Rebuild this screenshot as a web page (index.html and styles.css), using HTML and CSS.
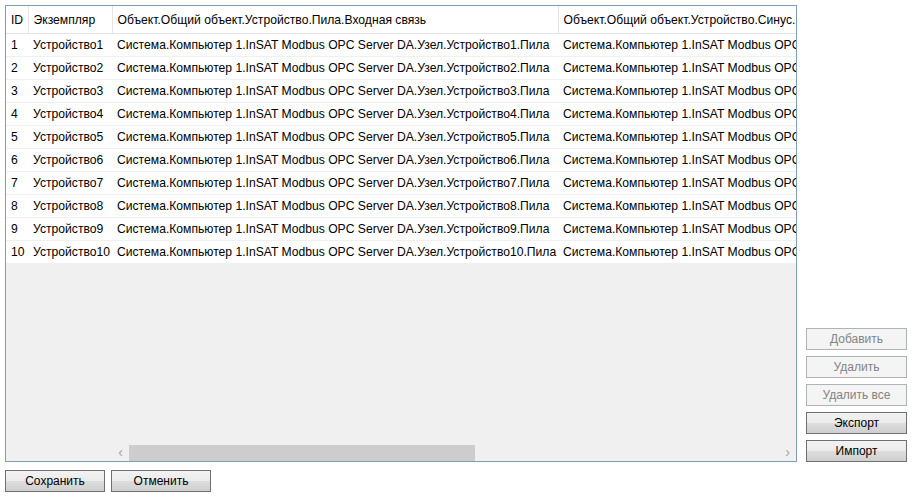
FILE: index.html
```html
<!DOCTYPE html>
<html lang="ru">
<head>
    <meta charset="UTF-8">
    <title>Экземпляры</title>
    <link rel="stylesheet" href="styles.css">
</head>
<body>
    <div class="main">
        <div class="grid">
            <div class="grid-view">
                <table class="data">
                    <colgroup>
                        <col class="c-id">
                        <col class="c-name">
                        <col class="c-link">
                        <col class="c-link2">
                    </colgroup>
                    <thead>
                        <tr>
                            <th>ID</th>
                            <th>Экземпляр</th>
                            <th>Объект.Общий объект.Устройство.Пила.Входная связь</th>
                            <th>Объект.Общий объект.Устройство.Синус.Входная связь</th>
                        </tr>
                    </thead>
                    <tbody id="rows"></tbody>
                </table>
            </div>
            <div class="hscroll">
                <div class="hscroll-frozen"></div>
                <div class="hscroll-arrow">&lsaquo;</div>
                <div class="hscroll-track"><div class="hscroll-thumb"></div></div>
                <div class="hscroll-arrow">&rsaquo;</div>
            </div>
        </div>
        <div class="side">
            <button class="btn" disabled>Добавить</button>
            <button class="btn" disabled>Удалить</button>
            <button class="btn" disabled>Удалить все</button>
            <button class="btn">Экспорт</button>
            <button class="btn">Импорт</button>
        </div>
    </div>
    <div class="footer">
        <button class="btn">Сохранить</button>
        <button class="btn">Отменить</button>
    </div>
    <script>
        var tbody = document.getElementById('rows');
        for (var i = 1; i <= 10; i++) {
            var tr = document.createElement('tr');
            var cells = [
                i,
                'Устройство' + i,
                'Система.Компьютер 1.InSAT Modbus OPC Server DA.Узел.Устройство' + i + '.Пила',
                'Система.Компьютер 1.InSAT Modbus OPC Server DA.Узел.Устройство' + i + '.Синус'
            ];
            cells.forEach(function (text) {
                var td = document.createElement('td');
                td.textContent = text;
                tr.appendChild(td);
            });
            tbody.appendChild(tr);
        }
    </script>
</body>
</html>
```

FILE: styles.css
```css
body {
    margin: 0;
    padding: 5px;
    background-color: #fff;
    font-family: "Liberation Sans", Arial, sans-serif;
    font-size: 12px;
    color: #000;
}
.main {
    display: flex;
    align-items: flex-end;
    gap: 9px;
}
.grid {
    width: 790px;
    height: 455px;
    border: 1px solid #7f9db9;
    background-color: #f0f0f0;
    display: flex;
    flex-direction: column;
}
.grid-view {
    flex: 1;
    overflow: hidden;
}
.data {
    border-collapse: collapse;
    table-layout: fixed;
    width: 792px;
    white-space: nowrap;
    font-size: 12.15px;
}
.c-id { width: 22px; }
.c-name { width: 84px; }
.c-link { width: 446px; }
.c-link2 { width: 240px; }
.data th {
    height: 27px;
    padding: 0 0 0 5px;
    text-align: left;
    font-weight: normal;
    background-color: #fff;
    border-right: 1px solid #e5e5e5;
    border-bottom: 1px solid #e5e5e5;
    overflow: hidden;
}
.data td {
    height: 22px;
    padding: 0 0 0 5px;
    background-color: #fff;
    border-bottom: 1px solid #f0f0f0;
    overflow: hidden;
}
.hscroll {
    height: 17px;
    display: flex;
    align-items: stretch;
}
.hscroll-frozen {
    width: 106px;
}
.hscroll-arrow {
    width: 17px;
    color: #a3a3a3;
    font-size: 14px;
    line-height: 16px;
    text-align: center;
}
.hscroll-track {
    flex: 1;
    padding-top: 1px;
}
.hscroll-thumb {
    width: 346px;
    height: 16px;
    background-color: #cdcdcd;
}
.side {
    display: flex;
    flex-direction: column;
    gap: 6px;
}
.btn {
    height: 22px;
    width: 101px;
    padding: 0;
    font-family: inherit;
    font-size: 12px;
    color: #000;
    border: 1px solid #707070;
    background: linear-gradient(#f2f2f2, #ebebeb 50%, #dddddd 51%, #cfcfcf);
    border-radius: 0;
}
.btn:disabled {
    color: #838383;
    border-color: #adb2b5;
    background: #f4f4f4;
}
.footer {
    display: flex;
    gap: 6px;
    margin-top: 8px;
}
.footer .btn {
    width: 100px;
}
```
